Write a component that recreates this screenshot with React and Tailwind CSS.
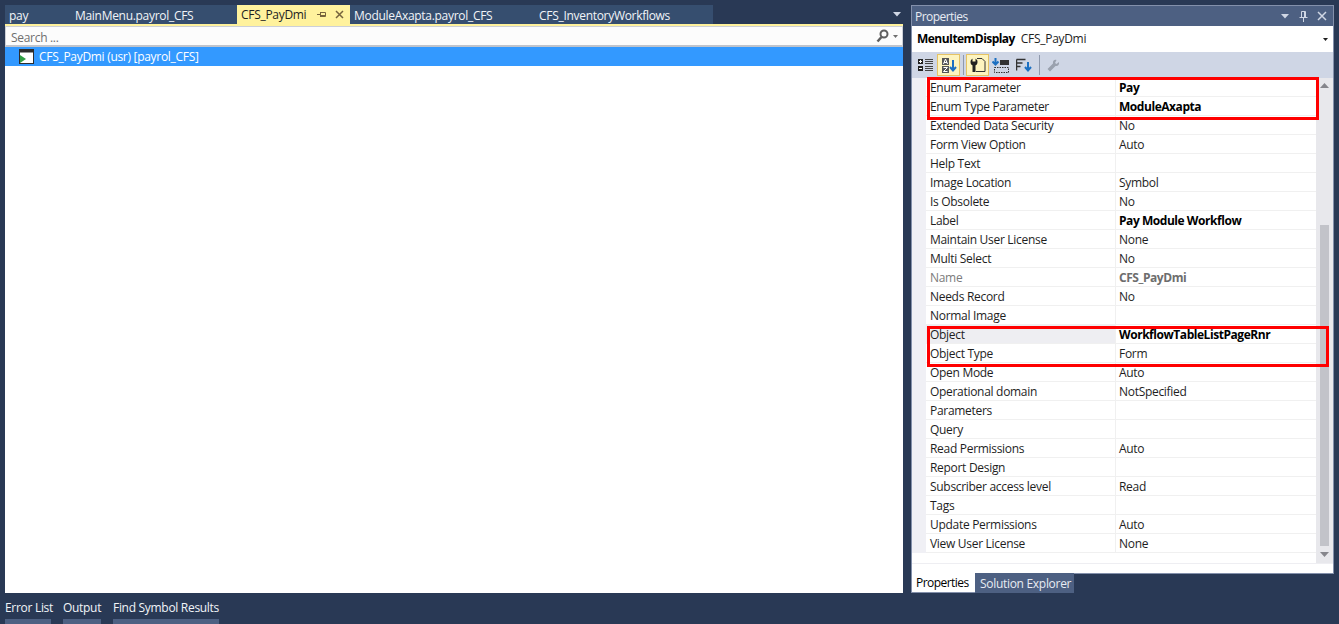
const rows = [
  ['Enum Parameter', 'Pay', 'bold'],
  ['Enum Type Parameter', 'ModuleAxapta', 'bold'],
  ['Extended Data Security', 'No'],
  ['Form View Option', 'Auto'],
  ['Help Text', ''],
  ['Image Location', 'Symbol'],
  ['Is Obsolete', 'No'],
  ['Label', 'Pay Module Workflow', 'bold'],
  ['Maintain User License', 'None'],
  ['Multi Select', 'No'],
  ['Name', 'CFS_PayDmi', 'muted'],
  ['Needs Record', 'No'],
  ['Normal Image', ''],
  ['Object', 'WorkflowTableListPageRnr', 'selected'],
  ['Object Type', 'Form'],
  ['Open Mode', 'Auto'],
  ['Operational domain', 'NotSpecified'],
  ['Parameters', ''],
  ['Query', ''],
  ['Read Permissions', 'Auto'],
  ['Report Design', ''],
  ['Subscriber access level', 'Read'],
  ['Tags', ''],
  ['Update Permissions', 'Auto'],
  ['View User License', 'None'],
];

function Tab({ label, width, pad = 'pl-[4px]' }) {
  return (
    <div className={`h-[19px] bg-[#364e6f] text-[#f1f4f8] leading-[22px] ${pad}`} style={{ width }}>
      {label}
    </div>
  );
}

function Row({ name, value, kind }) {
  const nameColor = kind === 'muted' ? 'text-[#7b7b7b]' : 'text-[#1e1e1e]';
  const valueColor = kind === 'muted' ? 'text-[#6d6d6d] font-bold tracking-[-0.45px]' : kind ? 'text-black font-bold tracking-[-0.45px]' : 'text-[#1e1e1e]';
  return (
    <div className="flex h-[19px] border-b border-[#f0f0f0] leading-[20px]">
      <div className={`w-[190px] pl-[4px] border-r border-[#f0f0f0] ${nameColor} ${kind === 'selected' ? 'bg-[#eeeef2]' : ''}`}>{name}</div>
      <div className={`flex-1 pl-[3px] ${valueColor}`}>{value}</div>
    </div>
  );
}

function ToolBtn({ active, children }) {
  return (
    <div className={`w-[23px] h-[22px] flex items-center justify-center border ${active ? 'bg-[#fdf4bf] border-[#e5c365]' : 'border-transparent'}`}>
      {children}
    </div>
  );
}

export default function App() {
  return (
    <div className="relative w-[1339px] h-[624px] overflow-hidden bg-[#293955] text-[12px] tracking-[-0.3px]" style={{ fontFamily: '"Open Sans", "Noto Sans", sans-serif' }}>
      <div className="flex h-full">
        {/* left: editor area */}
        <div className="w-[911px] flex flex-col shrink-0">
          <div className="flex h-[24px] pt-[5px] pl-[5px] pr-[8px]">
            <Tab label="pay" width={66} />
            <Tab label="MainMenu.payrol_CFS" width={166} />
            <div className="w-[113px] h-[19px] bg-[#fff29d] text-[#1e1e1e] pl-[4px] flex items-center justify-between pr-[6px]">
              <span className="leading-[22px]">CFS_PayDmi</span>
              <span className="flex items-center gap-[9px]">
                <svg width="9" height="9" viewBox="0 0 9 9"><path d="M0 4.5h3M3.5 2v5M3.5 2.500h5v4h-5M3.5 5.500h5" stroke="#75633d" fill="none" /></svg>
                <svg width="9" height="9" viewBox="0 0 9 9"><path d="M1 1l7 7M8 1l-7 7" stroke="#75633d" strokeWidth="1.5" fill="none" /></svg>
              </span>
            </div>
            <Tab label="ModuleAxapta.payrol_CFS" width={186} />
            <Tab label="CFS_InventoryWorkflows" width={177} pad="pl-[3px]" />
            <div className="flex-1 flex justify-end items-center pr-[1px]">
              <svg width="9" height="5" viewBox="0 0 9 5"><path d="M0 0h8L4 4.500z" fill="#d0d7e5" /></svg>
            </div>
          </div>
          <div className="h-[2px] mx-[5px] mr-[8px] bg-[#fff29d]" />
          <div className="w-[898px] ml-[5px] h-[567px] bg-white flex flex-col">
            <div className="h-[21px] flex items-center justify-between bg-[#fcfcfc] border border-[#ccd0d8] border-b-[2px] border-b-[#c0c4cc] pl-[5px] pr-[4px] text-[#6f6f6f]">
              <span className="leading-[22px] mt-[4px]">Search ...</span>
              <span className="flex items-center gap-[4px]">
                <svg width="13" height="14" viewBox="0 0 13 14"><circle cx="8" cy="5" r="3.500" stroke="#5f5f5f" strokeWidth="2" fill="none" /><path d="M5.500 8L1.500 12.500" stroke="#5f5f5f" strokeWidth="2.500" /></svg>
                <svg width="5" height="3" viewBox="0 0 5 3"><path d="M0 0h5L2.500 3z" fill="#6f6f6f" /></svg>
              </span>
            </div>
            <div className="h-[19px] bg-[#3399ff] text-white flex items-center pl-[14px] gap-[5px] leading-[19px]">
              <svg width="15" height="15" viewBox="0 0 15 15">
                <rect x="0.500" y="0.500" width="14" height="14" fill="#fff" stroke="#2d2d2d" />
                <rect x="1" y="1" width="13" height="2.500" fill="#2d2d2d" />
                <path d="M1 6l6 4-6 4z" fill="#2f9e44" />
              </svg>
              <span>CFS_PayDmi (usr) [payrol_CFS]</span>
            </div>
          </div>
          <div className="flex gap-[12px] pl-[5px] text-[#f1f4f8] mt-[5px]">
            <div className="w-[46px]"><div className="h-[21px] leading-[20px] whitespace-nowrap">Error List</div><div className="h-[5px] bg-[#4d6082]" /></div>
            <div className="w-[38px]"><div className="h-[21px] leading-[20px] whitespace-nowrap">Output</div><div className="h-[5px] bg-[#4d6082]" /></div>
            <div className="w-[106px]"><div className="h-[21px] leading-[20px] whitespace-nowrap">Find Symbol Results</div><div className="h-[5px] bg-[#4d6082]" /></div>
          </div>
        </div>

        {/* right: properties panel */}
        <div className="w-[423px] pt-[5px] shrink-0">
          <div className="h-[569px] border border-[#8390ab] bg-white flex flex-col">
            <div className="h-[20px] bg-[#4d6082] text-[#e8ecf3] flex items-center justify-between pl-[3px] pr-[6px]">
              <span className="leading-[20px] mt-[2px] tracking-[-0.55px]">Properties</span>
              <span className="flex items-center gap-[9px]">
                <svg width="9" height="5" viewBox="0 0 9 5"><path d="M0 0h8L4 4.500z" fill="#d0d7e5" /></svg>
                <svg width="9" height="11" viewBox="0 0 9 11"><path d="M2.500 0.500h4v6h-4zM5.500 1v5.500M0.500 6.500h8M4.500 7v4" stroke="#d0d7e5" fill="none" /></svg>
                <svg width="10" height="10" viewBox="0 0 10 10"><path d="M1 1l8 8M9 1l-8 8" stroke="#d0d7e5" strokeWidth="1.500" fill="none" /></svg>
              </span>
            </div>
            <div className="h-[27px] flex items-center justify-between pl-[5px] pr-[5px] text-[#1e1e1e]">
              <span><b className="text-black tracking-[-0.55px]">MenuItemDisplay</b><span className="ml-[6px]">CFS_PayDmi</span></span>
              <svg width="5" height="3" viewBox="0 0 5 3"><path d="M0 0h5L2.500 3z" fill="#1e1e1e" /></svg>
            </div>
            <div className="h-[26px] bg-[#cfd6e5] flex items-center pl-[2px]">
              <ToolBtn>
                <svg width="15" height="14" viewBox="0 0 15 14"><path d="M0 1h5v5H0zM0 8h5v5H0z" fill="#222" /><path d="M1 3.500h3M2.500 2v3M1 10.500h3" stroke="#fff" /><path d="M7 1.500h8M7 3.500h8M7 5.500h8M7 8.500h8M7 10.500h8M7 12.500h8" stroke="#444" /></svg>
              </ToolBtn>
              <ToolBtn active>
                <svg width="16" height="15" viewBox="0 0 16 15"><rect x="1" y="0" width="7" height="7" fill="#555" /><rect x="1" y="8" width="7" height="7" fill="#555" /><path d="M2.500 6l2-5 2 5M3 4.500h3M2.500 9.500h4l-4 4h4" stroke="#fff" fill="none" /><path d="M12 2v10M9 9l3 3.500L15 9" stroke="#1b6fc2" strokeWidth="2" fill="none" /></svg>
              </ToolBtn>
              <div className="w-[1px] h-[20px] bg-[#8f99ad] ml-[3px] mr-[2px]" />
              <ToolBtn active>
                <svg width="17" height="16" viewBox="0 0 17 16"><path d="M8 1.500h5l3 3v10H7" stroke="#333" fill="none" /><circle cx="5" cy="5" r="3.500" fill="#222" /><rect x="3.500" y="1" width="3" height="3.500" fill="#fdf4bf" /><rect x="3.500" y="7" width="3" height="8" fill="#222" /></svg>
              </ToolBtn>
              <ToolBtn>
                <svg width="17" height="15" viewBox="0 0 17 15"><path d="M3.500 0v6M0.500 3.500l3 3 3-3" stroke="#1b6fc2" strokeWidth="2" fill="none" /><rect x="8" y="2" width="9" height="5" fill="#333" /><rect x="2.500" y="9.500" width="14" height="5" fill="none" stroke="#333" strokeDasharray="1.500 1" /></svg>
              </ToolBtn>
              <ToolBtn>
                <svg width="16" height="15" viewBox="0 0 16 15"><path d="M0.500 1.500h9M0.500 1.500v11M0.500 5h6M0.500 8.500h4" stroke="#333" fill="none" strokeWidth="1.500" /><path d="M12 4v8M9 9l3 3.500L15 9" stroke="#1b6fc2" strokeWidth="2" fill="none" /></svg>
              </ToolBtn>
              <div className="w-[1px] h-[20px] bg-[#8f99ad] ml-[4px] mr-[2px]" />
              <ToolBtn>
                <svg width="13" height="13" viewBox="0 0 13 13"><path d="M12 3L9.500 5 8 4l1.500-3C7.500 0 5.500 2 6 4.500L0.500 10 3 12.500 8.500 7C11 7.500 12.500 5.500 12 3z" fill="#9aa1ae" /></svg>
              </ToolBtn>
            </div>
            <div className="flex h-[495px]">
              <div className="w-[14px] bg-[#f0f0f5] shrink-0 h-[475px]" />
              <div className="w-[390px] flex flex-col">
                <div className="h-[475px]">
                  {rows.map(([name, value, kind]) => (
                    <Row key={name} name={name} value={value} kind={kind} />
                  ))}
                </div>
              </div>
              <div className="w-[17px] bg-[#e8e8ec] flex flex-col items-center shrink-0">
                <svg className="mt-[5px]" width="9" height="5" viewBox="0 0 9 5"><path d="M4.500 0L9 5H0z" fill="#86868c" /></svg>
                <div className="w-[9px] h-[321px] bg-[#c2c3c9] mt-[137px]" />
                <svg className="mt-[6px]" width="9" height="5" viewBox="0 0 9 5"><path d="M0 0h9L4.500 5z" fill="#86868c" /></svg>
              </div>
            </div>
            <div className="h-[10px] border-t border-[#eeeef2]" />
          </div>
          <div className="flex h-[19px] -mt-[1px]">
            <div className="w-[64px] h-[20px] bg-white border-l border-b border-[#8390ab] pl-[4px] leading-[20px] text-black tracking-[-0.55px]">Properties</div>
            <div className="w-[99px] h-[20px] bg-[#4d6082] text-[#e8ecf3] pl-[5px] leading-[22px]">Solution Explorer</div>
          </div>
        </div>
      </div>

      {/* red annotation boxes */}
      <div className="absolute left-[927px] top-[77px] w-[392px] h-[43px] border-[3px] border-[#ff0000]" />
      <div className="absolute left-[927px] top-[326px] w-[402px] h-[41px] border-[3px] border-[#ff0000]" />
    </div>
  );
}
